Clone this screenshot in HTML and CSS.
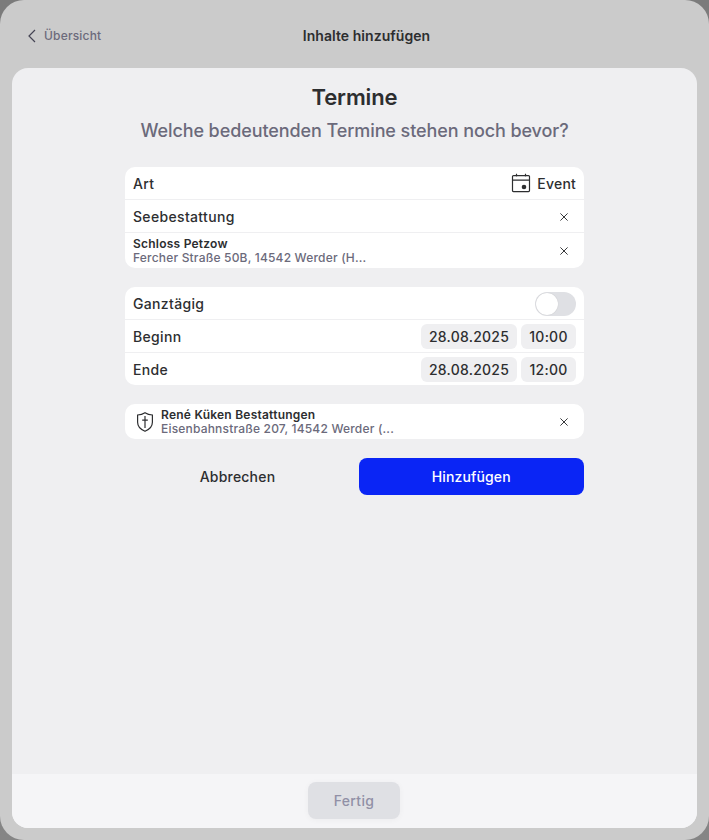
FILE: index.html
```html
<!DOCTYPE html>
<html lang="de">
<head>
<meta charset="utf-8">
<title>Inhalte hinzufügen</title>
<link rel="stylesheet" href="styles.css">
</head>
<body>
<div class="modal">
  <header class="topbar">
    <a class="back"><svg width="8" height="14" viewBox="0 0 8 14"><path d="M7 1 1 7l6 6"/></svg><span>Übersicht</span></a>
    <h1>Inhalte hinzufügen</h1>
  </header>
  <main class="sheet">
    <section class="content">
      <h2>Termine</h2>
      <p class="subtitle">Welche bedeutenden Termine stehen noch bevor?</p>
      <div class="group">
        <div class="row"><span>Art</span>
          <span class="kind"><svg width="20" height="20" viewBox="0 0 20 20"><path d="M2.5 2.6h15q1 0 1 1v14q0 1-1 1h-15q-1 0-1-1v-14q0-1 1-1zM1.5 7.2h17M5.5.8v2.7M14.5.8v2.7"/><circle cx="13" cy="14" r="2.3"/></svg><span>Event</span></span></div>
        <div class="row"><span>Seebestattung</span><svg class="close" width="8" height="8" viewBox="0 0 8 8"><path d="m.4.4 7.2 7.2M7.6.4.4 7.6"/></svg></div>
        <div class="row place"><div class="details"><strong>Schloss Petzow</strong><small>Fercher Straße 50B, 14542 Werder (H...</small></div><svg class="close" width="8" height="8" viewBox="0 0 8 8"><path d="m.4.4 7.2 7.2M7.6.4.4 7.6"/></svg></div>
      </div>
      <div class="group">
        <div class="row"><span>Ganztägig</span><span class="toggle"></span></div>
        <div class="row"><span>Beginn</span><span class="values"><span class="chip date">28.08.2025</span><span class="chip time">10:00</span></span></div>
        <div class="row"><span>Ende</span><span class="values"><span class="chip date">28.08.2025</span><span class="chip time">12:00</span></span></div>
      </div>
      <div class="group">
        <div class="row place"><svg class="shield" width="24" height="24" viewBox="0 0 24 24"><path d="M12 2.8c2.2 1.4 4.7 2.1 7.4 2.2v7.2c0 4.2-3 7.2-7.4 9.1-4.4-1.9-7.4-4.9-7.4-9.1V5c2.7-.1 5.2-.8 7.4-2.2zM12 6v12M9.2 10.1h5.6"/></svg><div class="details"><strong>René Küken Bestattungen</strong><small>Eisenbahnstraße 207, 14542 Werder (...</small></div><svg class="close" width="8" height="8" viewBox="0 0 8 8"><path d="m.4.4 7.2 7.2M7.6.4.4 7.6"/></svg></div>
      </div>
      <div class="actions"><button class="cancel">Abbrechen</button><button class="add">Hinzufügen</button></div>
    </section>
    <footer class="footer"><button class="done">Fertig</button></footer>
  </main>
</div>
</body>
</html>
```

FILE: styles.css
```css
* { box-sizing: border-box; }
body {
  margin: 0;
  background: linear-gradient(#7b7b7b, #858585);
  color: #2d2e30;
  font: 500 14px/20px Inter, sans-serif;
  letter-spacing: .33px;
}
h1, h2, p { margin: 0; }
svg { display: block; flex: none; fill: none; stroke: currentColor; }
button { border: 0; padding: 0; background: none; color: inherit; font: inherit; letter-spacing: inherit; }
.modal {
  display: flex;
  flex-direction: column;
  height: 840px;
  padding: 0 12px 12px;
  border-radius: 24px;
  background: #cbcbcb;
}
.topbar {
  display: grid;
  grid-template-columns: 1fr auto 1fr;
  align-items: center;
  height: 68px;
  padding: 4px 0 0 16px;
}
.topbar h1 { margin-left: 8px; font-size: 14px; font-weight: 600; letter-spacing: .05px; }
.back { display: flex; align-items: center; gap: 8px; color: #6b6a7b; font-size: 12px; letter-spacing: .18px; }
.back svg { color: #454454; stroke-width: 1.2; }
.sheet {
  display: flex;
  flex: 1;
  flex-direction: column;
  overflow: hidden;
  border-radius: 16px;
  background: #efeff1;
}
.content { flex: 1; width: 459px; margin: 0 auto; padding-top: 15px; }
.content h2 { font-size: 22px; line-height: 28px; font-weight: 600; letter-spacing: -.12px; text-align: center; }
.subtitle { margin: 7px 0 24px; font-size: 18px; line-height: 25px; letter-spacing: -.09px; text-align: center; white-space: nowrap; color: #6b6a7b; }
.group { margin-bottom: 19px; overflow: hidden; border-radius: 10px; background: #fff; }
.row { display: flex; align-items: center; justify-content: space-between; height: 32px; padding: 2px 8px 0; }
.row + .row { height: 33px; border-top: 1px solid #efeff1; }
.group .place { height: 35px; padding-top: 0; }
.group .row + .place { height: 36px; }
.kind { display: flex; align-items: center; gap: 6px; letter-spacing: .2px; }
.kind svg { margin-top: -2px; stroke-width: 1.2; }
.kind circle { fill: currentColor; stroke: none; }
.close { margin-right: 8px; stroke-width: .95; }
.details { flex: 1; font-size: 12px; line-height: 14px; }
.details strong, .details small { display: block; font-size: 12px; }
.details strong { font-weight: 600; letter-spacing: .23px; }
.details small { font-weight: 500; color: #6b6a7b; letter-spacing: .19px; }
.shield { margin-right: 4px; stroke-width: 1.2; }
.toggle { width: 41px; height: 24px; margin-top: -1px; padding: 1px; border-radius: 12px; background: #dfe0e4; }
.toggle::before { content: ""; display: block; width: 22px; height: 22px; border-radius: 50%; background: #fff; box-shadow: 0 0 1px #0003; }
.values { display: flex; gap: 4px; margin-top: -1px; }
.chip { height: 25px; border-radius: 6px; background: #efeff1; line-height: 26px; text-align: center; letter-spacing: .25px; }
.date { width: 96px; }
.time { width: 55px; }
.actions { display: grid; grid-template-columns: 225px 225.5px; gap: 8.5px; }
.actions button { height: 37px; border-radius: 8px; padding-top: 1px; letter-spacing: .2px; }
.actions .add { background: #0a25f5; color: #fff; letter-spacing: .14px; }
.footer { display: flex; align-items: center; justify-content: center; height: 54px; padding: 0 1px 1px 0; background: #f5f5f7; }
.done { width: 92px; height: 37px; padding-top: 1px; border-radius: 8px; background: #dfe0e4; color: #9190a6; letter-spacing: .3px; box-shadow: 0 1px 6px #0000000a; }
```
